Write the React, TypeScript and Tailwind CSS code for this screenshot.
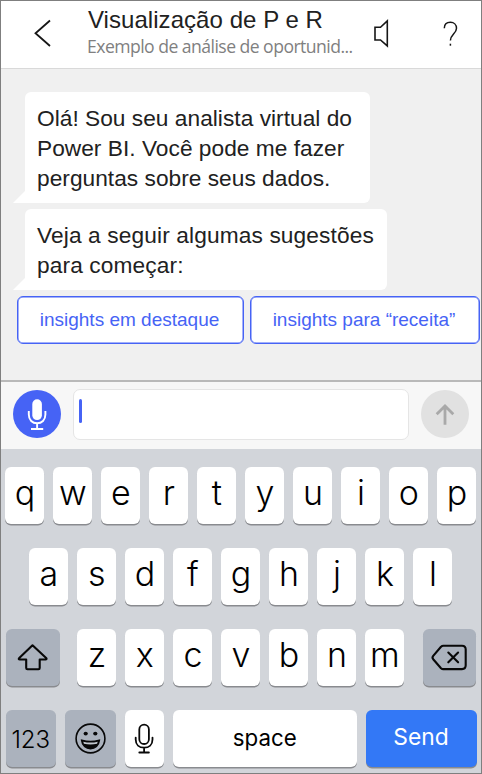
import type { ReactNode } from "react";

const KEY = "flex h-[57px] items-center justify-center rounded-[6px] shadow-[0_1.5px_0_#898b8f]";
const LETTER = `${KEY} w-[39px] shrink-0 bg-white pb-[6px] text-[34px] font-[340] text-black`;
const CHIP = "h-[48px] rounded-[6px] border border-[#4663f5] bg-white shadow-[inset_0_0_0_0.5px_#4663f5]";

function LetterKeys({ letters }: { letters: string }) {
  return (
    <div className="flex gap-[9px]">
      {letters.split("").map((letter) => (
        <button key={letter} className={LETTER}>
          {letter}
        </button>
      ))}
    </div>
  );
}

function Bubble({ children, className }: { children: ReactNode; className: string }) {
  return (
    <div className={`relative ml-6 rounded-[6px] rounded-bl-none bg-white pl-3 pt-[11px] text-[22.7px] leading-[30px] whitespace-nowrap text-[#212121] ${className}`}>
      <svg className="absolute bottom-0 -left-3 h-3 w-3" viewBox="0 0 12 12">
        <path d="M12 0v12H0z" fill="#fff" />
      </svg>
      {children}
    </div>
  );
}

export default function App() {
  return (
    <div className="flex h-[774px] w-[482px] flex-col overflow-hidden border border-[#7f7f7f] bg-[#f0f0f0] font-['Liberation_Sans',Arial,sans-serif]">
      <header className="flex h-[68px] shrink-0 border-b border-[#d9d9d9] bg-white">
        <button className="w-[86px] shrink-0">
          <svg width="86" height="67" viewBox="1 1 86 67" fill="none" stroke="#161616" strokeWidth="1.8">
            <path d="M50 20.5 35.5 33.3 50 46" />
          </svg>
        </button>
        <div className="w-[270px] shrink-0 pt-[5px] whitespace-nowrap">
          <h1 className="pl-px text-[24px] leading-[28px] tracking-[0.05px] text-[#212121]">Visualização de P e R</h1>
          <p className="font-['Open_Sans','Noto_Sans',sans-serif] text-[17.6px] leading-[24px] tracking-[-0.54px] text-[#808080]">
            Exemplo de análise de oportunid...
          </p>
        </div>
        <button className="w-[50px] shrink-0">
          <svg width="50" height="67" viewBox="357 1 50 67" fill="none" stroke="#161616" strokeWidth="1.6">
            <path d="M387.3 20.8V45.9L380.5 40H375V27.3H380.5z" />
          </svg>
        </button>
        <button className="w-[74px] shrink-0">
          <svg width="74" height="67" viewBox="407 1 74 67" fill="none" stroke="#161616" strokeWidth="1.5">
            <path d="M444.3 28.3C444.3 24.5 446.8 22.3 450.4 22.3C454 22.3 456.5 24.8 456.5 28.2C456.5 33.7 450.4 34.5 450.4 40.5" />
            <path d="M450.4 43.7v2" />
          </svg>
        </button>
      </header>

      <main className="flex h-[311px] shrink-0 flex-col items-start pt-[23px]">
        <Bubble className="h-[111px] w-[345px] tracking-[0.03px]">
          Olá! Sou seu analista virtual do
          <br />
          Power BI. Você pode me fazer
          <br />
          perguntas sobre seus dados.
        </Bubble>
        <Bubble className="mt-[6px] h-[81px] w-[362px] tracking-[0.13px]">
          Veja a seguir algumas sugestões
          <br />
          para começar:
        </Bubble>
        <div className="mt-[6px] ml-4 flex gap-[6px] text-[19px] whitespace-nowrap text-[#4663f5]">
          <button className={`${CHIP} w-[227px] pr-[2px]`}>insights em destaque</button>
          <button className={`${CHIP} w-[230px] pr-[2px]`}>insights para “receita”</button>
        </div>
      </main>

      <div className="flex h-[69px] shrink-0 items-start border-t-2 border-[#b9b9b9] bg-[#f7f7f7] pt-[7px] pl-3">
        <button className="mt-[1px] h-12 w-12 shrink-0 rounded-full bg-[#4663f5]">
          <svg width="48" height="48" viewBox="13 390 48 48" fill="none" stroke="#fff" strokeWidth="1.9">
            <rect x="32.3" y="399.3" width="9.6" height="20.8" rx="4.8" fill="#fff" stroke="none" />
            <path d="M28.8 411v3.6c0 5.5 3.6 8.7 8.3 8.7s8.3-3.2 8.3-8.7V411M37.1 423.3v5.5M31 429h12.2" />
          </svg>
        </button>
        <div className="ml-3 h-[51px] w-[336px] shrink-0 rounded-[7px] border border-[#e5e5e5] bg-white pt-[9px] pl-[5px]">
          <div className="h-6 w-[3px] rounded-full bg-[#4663f5]" />
        </div>
        <button className="mt-[1px] ml-3 h-12 w-12 shrink-0 rounded-full bg-[#e1e1e1]">
          <svg width="48" height="48" viewBox="421 390 48 48" fill="none" stroke="#a9a9a9" strokeWidth="2.8">
            <path d="M445 424.8V406M436.7 414.3 445 406l8.3 8.3" />
          </svg>
        </button>
      </div>

      <div className="flex flex-1 flex-col gap-6 bg-[#d2d5da] pt-[18px] font-['Inter','Roboto',sans-serif]">
        <div className="pl-[4.4px]">
          <LetterKeys letters="qwertyuiop" />
        </div>
        <div className="pl-[28.4px]">
          <LetterKeys letters="asdfghjkl" />
        </div>
        <div className="flex pl-[5px]">
          <button className={`${KEY} mr-[17.4px] w-[54px] bg-[#abb2bd]`}>
            <svg width="54" height="57" viewBox="6 629 54 57" fill="none" stroke="#080808" strokeWidth="2.1" strokeLinejoin="round">
              <path d="M32.5 645.3 46.4 658.3Q47 659.4 45.5 659.5H39.7V668Q39.7 669.2 38.5 669.2H27.5Q26.2 669.2 26.2 668V659.5H19.8Q18.2 659.3 19 658.3z" />
            </svg>
          </button>
          <LetterKeys letters="zxcvbnm" />
          <button className={`${KEY} ml-[18.3px] w-[53.5px] bg-[#abb2bd]`}>
            <svg width="53" height="57" viewBox="423 629 53 57" fill="none" stroke="#080808" strokeWidth="2.1" strokeLinejoin="round" strokeLinecap="round">
              <path d="M443.4 645.8H462Q465.7 645.8 465.7 649.5V665.3Q465.7 669.1 462 669.1H443.4Q442 669.1 441 668.2L433.2 659.2Q431.8 657.5 433.2 655.8L441 646.7Q442 645.8 443.4 645.8z" />
              <path d="m448.3 652.5 9.8 9.8m0-9.8-9.8 9.8" />
            </svg>
          </button>
        </div>
        <div className="flex pl-[4.5px]">
          <button className={`${KEY} w-[50.5px] bg-[#abb2bd] pt-[3px] text-[24px] font-[350] text-black`}>123</button>
          <button className={`${KEY} ml-[9px] w-[51px] bg-[#abb2bd]`}>
            <svg width="51" height="57" viewBox="65.5 710 51 57" fill="none" stroke="#080808" strokeWidth="1.6">
              <circle cx="91" cy="738.5" r="14.4" />
              <ellipse cx="86.2" cy="733.6" rx="2.1" ry="1.9" fill="#080808" stroke="none" />
              <ellipse cx="95.8" cy="733.6" rx="2.1" ry="1.9" fill="#080808" stroke="none" />
              <path d="M82.2 740.3Q91 742.8 99.8 740.3C99.2 745.5 95.6 748.7 91 748.7S82.8 745.5 82.2 740.3z" fill="#080808" />
              <path d="M83.8 741.7Q91 743.5 98.2 741.7L97.6 743.8Q91 745.4 84.4 743.8z" fill="#c2c7ce" stroke="none" />
            </svg>
          </button>
          <button className={`${KEY} ml-[9px] w-[39px] bg-white`}>
            <svg width="39" height="57" viewBox="125.5 710 39 57" fill="none" stroke="#080808" strokeWidth="1.8" strokeLinecap="round">
              <rect x="139.8" y="724.7" width="9.6" height="19.3" rx="4.8" />
              <path d="M136.2 737.6v1.8c0 5.2 3.5 8.3 8.4 8.3s8.4-3.1 8.4-8.3v-1.8M144.6 747.7v4.6M139.8 752.5h9.6" />
            </svg>
          </button>
          <button className={`${KEY} ml-[9px] w-[183.5px] bg-white pb-[2px] text-[22.3px] text-black`}>space</button>
          <button className={`${KEY} ml-[9px] w-[111px] bg-[#3378f6] pb-[2px] text-[22.8px] text-white`}>Send</button>
        </div>
      </div>
    </div>
  );
}
